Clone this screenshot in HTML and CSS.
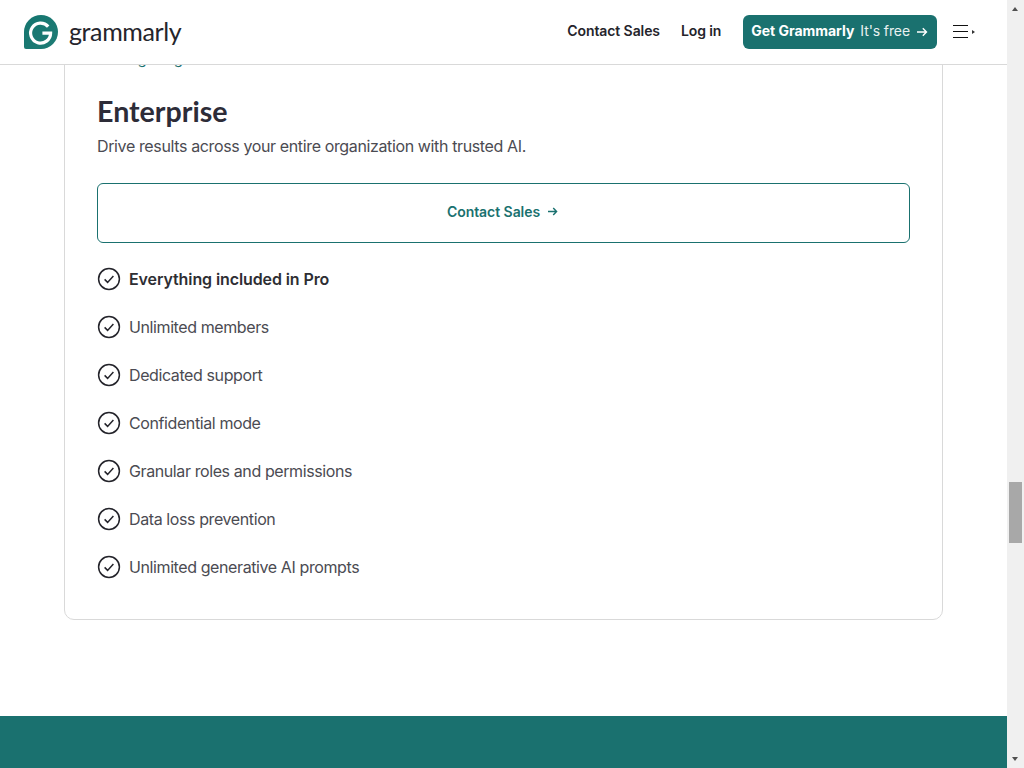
FILE: index.html
```html
<!DOCTYPE html>
<html lang="en">
<head>
<meta charset="utf-8">
<title>Grammarly Enterprise</title>
<link rel="stylesheet" href="styles.css">
</head>
<body>
<div class="window">
  <div class="page">
    <header class="header">
      <a class="brand" href="#">
        <svg class="logo" viewBox="0 0 34 34" width="34" height="34" aria-hidden="true">
          <defs><linearGradient id="lg" x1="0" y1="0" x2="1" y2="1"><stop offset="0" stop-color="#14756f"/><stop offset="1" stop-color="#1f7c75"/></linearGradient></defs>
          <path d="M17 0a17 17 0 0 1 0 34H2a2 2 0 0 1-2-2V17A17 17 0 0 1 17 0z" fill="url(#lg)"/>
          <path d="M24.2 11.6A10 10 0 1 0 26.6 18.2H18.4" fill="none" stroke="#fff" stroke-width="3.2"/>
        </svg>
        <span class="wordmark">grammarly</span>
      </a>
      <nav class="nav">
        <a class="nav-link nav-first" href="#">Contact Sales</a>
        <a class="nav-link" href="#">Log in</a>
        <a class="cta" href="#"><b>Get Grammarly</b><span class="cta-note">It's free</span>
          <svg class="arrow" viewBox="0 0 12 10" width="12" height="10" aria-hidden="true"><path d="M1 5h9.5M6.8 1.2 10.5 5 6.8 8.8" fill="none" stroke="currentColor" stroke-width="1.4"/></svg>
        </a>
        <button class="menu" aria-label="Menu">
          <span class="bars"><i></i><i></i><i></i></span>
          <span class="caret"></span>
        </button>
      </nav>
    </header>
    <main class="main">
      <section class="card">
        <a class="clipped" href="#">Manage logs</a>
        <h2 class="title">Enterprise</h2>
        <p class="lead">Drive results across your entire organization with trusted AI.</p>
        <a class="outline" href="#">Contact Sales
          <svg class="arrow arrow-sm" viewBox="0 0 12 10" width="11" height="9" aria-hidden="true"><path d="M1 5h9.5M6.8 1.2 10.5 5 6.8 8.8" fill="none" stroke="currentColor" stroke-width="1.6"/></svg>
        </a>
        <ul class="features">
          <li class="feature strong"><svg class="check" viewBox="0 0 24 24" width="24" height="24" aria-hidden="true"><circle cx="12" cy="12" r="10.4"/><path d="M7.6 12.4l3 3 5.8-6.4"/></svg>Everything included in Pro</li>
          <li class="feature"><svg class="check" viewBox="0 0 24 24" width="24" height="24" aria-hidden="true"><circle cx="12" cy="12" r="10.4"/><path d="M7.6 12.4l3 3 5.8-6.4"/></svg>Unlimited members</li>
          <li class="feature"><svg class="check" viewBox="0 0 24 24" width="24" height="24" aria-hidden="true"><circle cx="12" cy="12" r="10.4"/><path d="M7.6 12.4l3 3 5.8-6.4"/></svg>Dedicated support</li>
          <li class="feature"><svg class="check" viewBox="0 0 24 24" width="24" height="24" aria-hidden="true"><circle cx="12" cy="12" r="10.4"/><path d="M7.6 12.4l3 3 5.8-6.4"/></svg>Confidential mode</li>
          <li class="feature"><svg class="check" viewBox="0 0 24 24" width="24" height="24" aria-hidden="true"><circle cx="12" cy="12" r="10.4"/><path d="M7.6 12.4l3 3 5.8-6.4"/></svg>Granular roles and permissions</li>
          <li class="feature"><svg class="check" viewBox="0 0 24 24" width="24" height="24" aria-hidden="true"><circle cx="12" cy="12" r="10.4"/><path d="M7.6 12.4l3 3 5.8-6.4"/></svg>Data loss prevention</li>
          <li class="feature"><svg class="check" viewBox="0 0 24 24" width="24" height="24" aria-hidden="true"><circle cx="12" cy="12" r="10.4"/><path d="M7.6 12.4l3 3 5.8-6.4"/></svg>Unlimited generative AI prompts</li>
        </ul>
      </section>
    </main>
    <div class="band"></div>
  </div>
  <div class="scrollbar" aria-hidden="true">
    <span class="sb-up"></span>
    <div class="sb-track"><span class="sb-thumb"></span></div>
    <span class="sb-down"></span>
  </div>
</div>
</body>
</html>
```

FILE: styles.css
```css
* { box-sizing: border-box; }
html, body { margin: 0; height: 100%; overflow: hidden; background: #fff; }
body { font-family: Inter, "Liberation Sans", sans-serif; color: #24242b; }
a { text-decoration: none; color: inherit; }

.window { display: flex; width: 1024px; height: 768px; }
.page { display: flex; flex-direction: column; width: 1007px; height: 768px; }

.header {
  flex: none; position: relative; z-index: 2;
  display: flex; align-items: center; justify-content: space-between;
  height: 65px; padding: 0 31px 1px 24px;
  background: #fff; border-bottom: 1px solid #d9d9d9;
}
.brand { display: flex; align-items: center; gap: 11px; }
.logo { display: block; }
.wordmark { font-family: Lato, sans-serif; font-size: 25px; line-height: 34px; padding-bottom: 2px; color: #25252c; letter-spacing: -0.4px; }

.nav { display: flex; align-items: center; }
.nav-link { font-size: 14px; font-weight: 600; color: #24242b; margin-right: 22px; padding-bottom: 2px; letter-spacing: -0.1px; }
.nav-first { margin-right: 21px; }
.cta {
  display: flex; align-items: center; height: 34px; padding: 0 9px 2px 8px;
  margin-right: 16px; border-radius: 6px; background: #1a716f; color: #fff; font-size: 14px; letter-spacing: -0.1px;
}
.cta b { font-weight: 700; letter-spacing: -0.03px; }
.cta-note { margin: 0 6px 0 6px; opacity: .9; font-weight: 400; }
.arrow { display: block; flex: none; }
.cta .arrow { margin-top: 2px; }
.menu { display: flex; align-items: center; gap: 4px; width: 23px; height: 24px; padding: 0; border: 0; background: none; }
.bars { display: flex; flex-direction: column; gap: 5px; width: 15px; }
.bars i { display: block; height: 1px; background: #111; }
.caret { width: 0; height: 0; border-left: 3px solid #333; border-top: 2px solid transparent; border-bottom: 2px solid transparent; }

.main { flex: 1; min-height: 0; overflow: hidden; padding: 0 64px; }
.card {
  margin-top: -38px; width: 879px; height: 593px;
  padding: 21px 32px 0; border: 1px solid #d9d9d9; border-radius: 10px;
}
.clipped { display: block; font-size: 15px; line-height: 20px; color: #1a716f; height: 20px; letter-spacing: 0.3px; }
.title { margin: 24px 0 0; font-family: Lato, sans-serif; font-size: 28.6px; line-height: 36px; font-weight: 700; color: #2d2c38; }
.lead { margin: 5px 0 0; font-size: 16px; line-height: 24px; color: #4b4b52; letter-spacing: -0.37px; }
.outline {
  display: flex; align-items: center; justify-content: center; gap: 7px;
  height: 60px; margin-top: 25px; padding: 0 2px 4px 0; width: 813px;
  border: 1px solid #1a716f; border-radius: 6px;
  color: #1a716f; font-size: 14px; font-weight: 600; letter-spacing: -0.05px;
}
.arrow-sm { margin-top: 1px; }
.features { list-style: none; margin: 12px 0 0; padding: 0; }
.feature { display: flex; align-items: center; gap: 8px; height: 48px; font-size: 16px; color: #4b4b52; letter-spacing: -0.4px; }
.feature.strong { color: #2e2e33; font-weight: 600; letter-spacing: -0.1px; }
.check { flex: none; fill: none; stroke: #24242b; stroke-width: 1.5; }

.band { flex: none; height: 52px; background: #1a716f; }

.scrollbar { display: flex; flex-direction: column; width: 17px; height: 768px; background: #f0f0f0; }
.sb-up, .sb-down { flex: none; position: relative; height: 17px; }
.sb-up::after, .sb-down::after {
  content: ""; position: absolute; left: 5px; width: 0; height: 0;
  border-left: 3.5px solid transparent; border-right: 3.5px solid transparent;
}
.sb-up::after { top: 7px; border-bottom: 4px solid #505050; }
.sb-down::after { top: 6px; border-top: 4px solid #505050; }
.sb-track { flex: 1; padding-top: 465px; }
.sb-thumb { display: block; width: 13px; height: 61px; margin-left: 2px; background: #a8a8a8; }
```
